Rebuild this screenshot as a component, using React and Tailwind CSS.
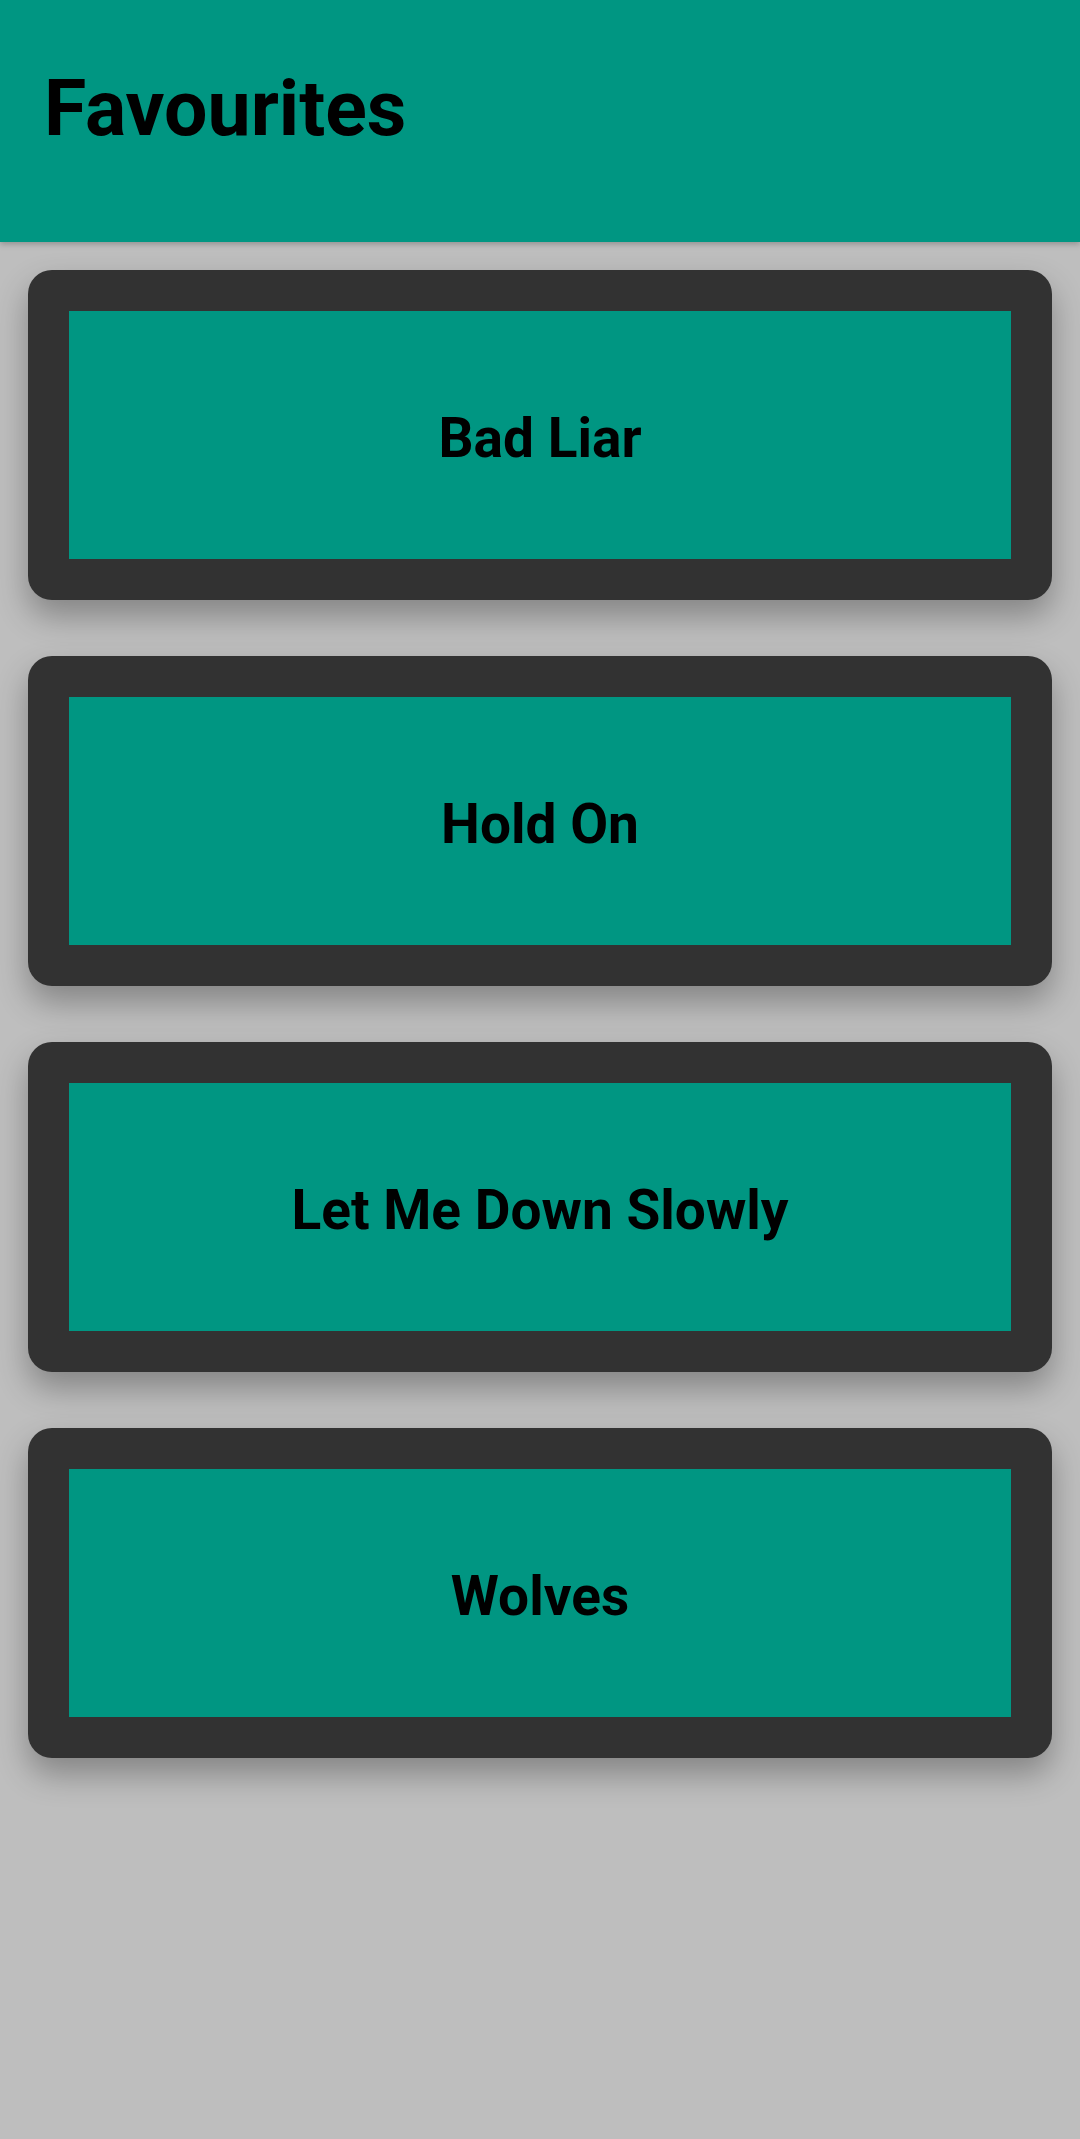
export default function App() {
  const items = ["Bad Liar", "Hold On", "Let Me Down Slowly", "Wolves"];
  return (
    <div className="min-h-[2139px] w-[1080px] bg-[#bebebe] font-['Roboto',sans-serif]">
      <div className="relative z-10 h-[242px] bg-[#009682] pl-[44px] pt-[64px] shadow-[0_2px_6px_rgba(0,0,0,0.25)]">
        <h1 className="text-[77px] font-bold leading-[90px] text-black">Favourites</h1>
      </div>
      <div className="flex flex-col gap-[56px] px-[28px] pt-[28px]">
        {items.map((t) => (
          <div
            key={t}
            className="h-[330px] rounded-[24px] bg-[#323232] p-[41px] shadow-[0_16px_32px_rgba(0,0,0,0.3)]"
          >
            <div className="flex h-full items-center justify-center bg-[#009682] pt-[6px]">
              <span className="text-[55px] font-bold text-black">{t}</span>
            </div>
          </div>
        ))}
      </div>
    </div>
  );
}
